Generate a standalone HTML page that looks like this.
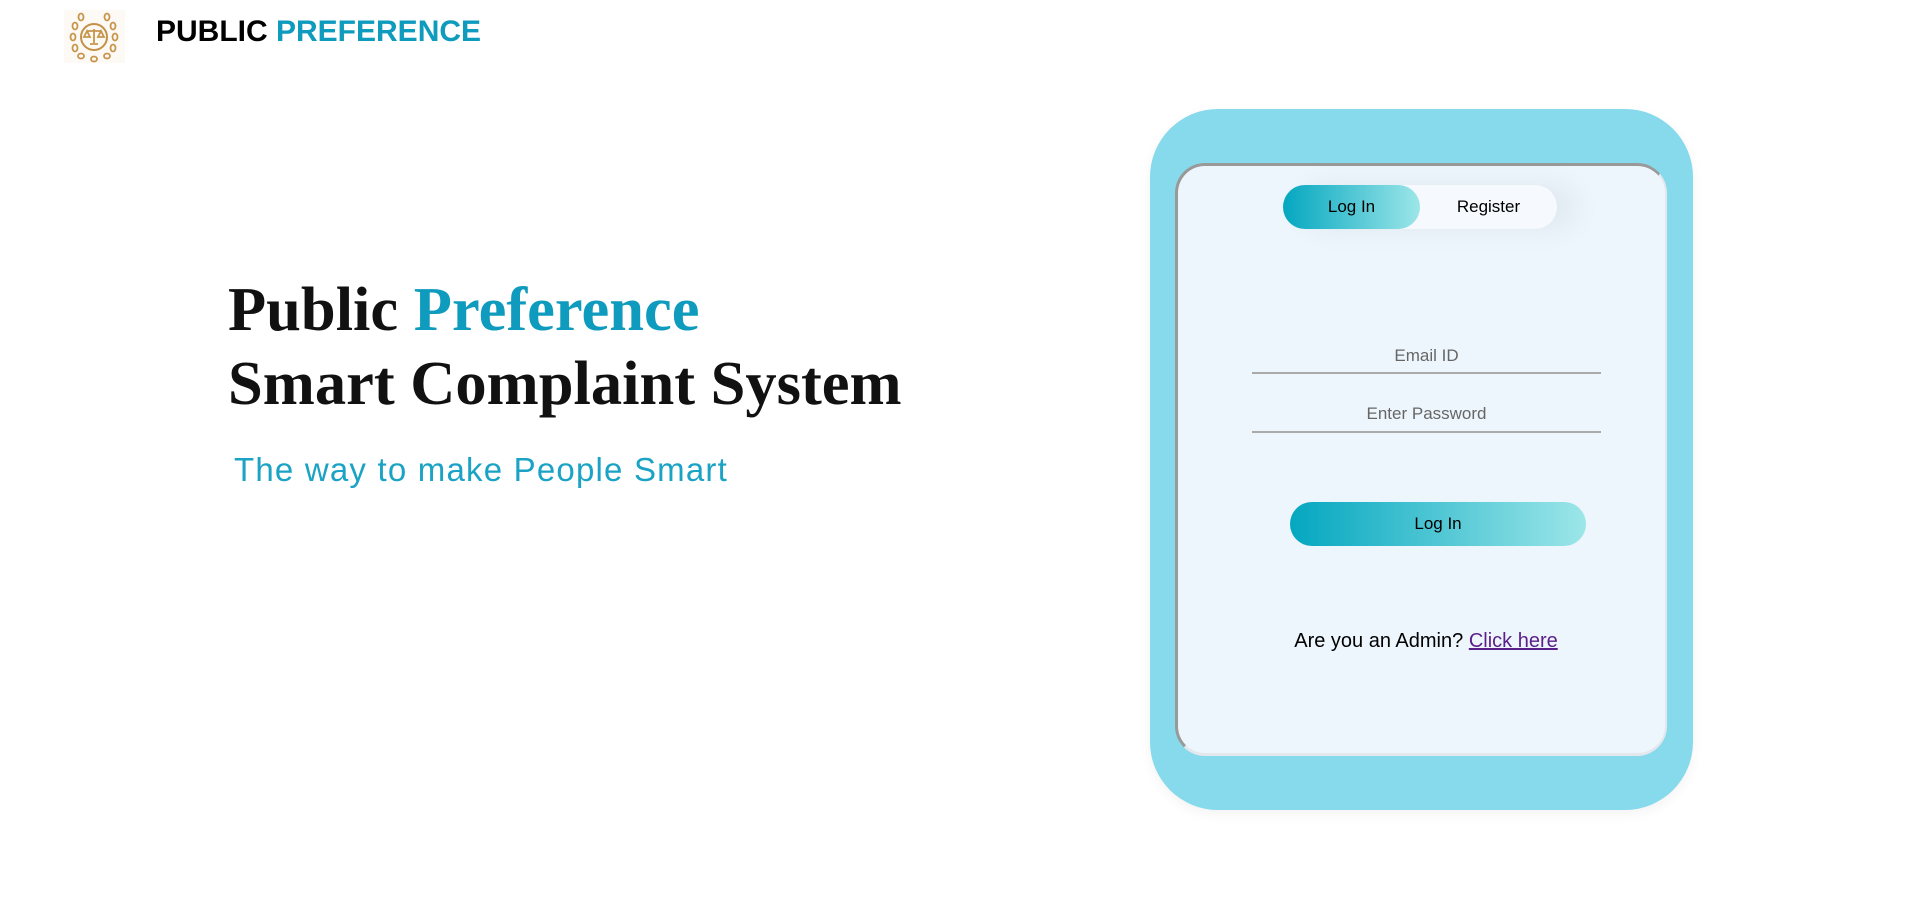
<!DOCTYPE html>
<html><head><meta charset="utf-8"><style>
*{margin:0;padding:0;box-sizing:border-box}
body{width:1919px;height:923px;background:#fff;position:relative;overflow:hidden;font-family:"Liberation Sans",Arial,sans-serif}
.abs{position:absolute}
.hdr{left:156px;top:15px;font-size:30px;font-weight:bold;color:#000;white-space:nowrap}
.c{color:#0e9bbd}
.h1{left:228px;top:272px;font-family:"Liberation Serif",serif;font-weight:bold;font-size:62.5px;line-height:74px;color:#111;white-space:nowrap}
.tag{left:234px;top:451px;font-size:33px;color:#1aa3c4;letter-spacing:1.2px;white-space:nowrap}
.outer{left:1150px;top:109px;width:543px;height:701px;border-radius:68px;background:#87d9ec;box-shadow:0 4px 12px rgba(0,0,0,0.05)}
.inner{left:1175px;top:163px;width:492px;height:593px;border-radius:30px;background:#eef6fd;border-top:3px solid #999;border-left:3px solid #999;border-right:2px solid #e4e8ec;border-bottom:3px solid #e4e8ec}
.tabs{left:1283px;top:185px;width:274px;height:44px;border-radius:22px;background:#f6f9fd;box-shadow:20px 0 30px rgba(0,0,0,0.06)}
.tab1{left:1283px;top:185px;width:137px;height:44px;border-radius:22px;background:linear-gradient(90deg,#04a7c0,#9ce6e8);font-size:17px;line-height:44px;text-align:center;color:#000}
.tab2{left:1420px;top:185px;width:137px;height:44px;font-size:17px;line-height:44px;text-align:center;color:#000}
.inp{left:1252px;width:349px;border-bottom:2px solid #aaa;text-align:center;color:#666;font-size:17px}
.btn{left:1290px;top:502px;width:296px;height:44px;border-radius:22px;background:linear-gradient(90deg,#04a7c0,#9ce6e8);text-align:center;line-height:44px;font-size:17px;color:#000}
.adm{left:1226px;top:630px;width:400px;text-align:center;font-size:20px;color:#000}
.adm a{color:#5b1f8a;text-decoration:underline}
</style></head><body>
<svg class="abs" style="left:64px;top:10px" width="61" height="53" viewBox="0 0 61 53">
<rect width="61" height="53" fill="#fdfaf5"/>
<circle cx="30" cy="27" r="13" fill="none" stroke="#c49149" stroke-width="2"/>
<g fill="none" stroke="#c8954c" stroke-width="1.8">
<ellipse cx="9" cy="27" rx="2.5" ry="3.5"/><ellipse cx="51" cy="27" rx="2.5" ry="3.5"/>
<ellipse cx="11" cy="16" rx="2.5" ry="3.5"/><ellipse cx="49" cy="16" rx="2.5" ry="3.5"/>
<ellipse cx="11" cy="38" rx="2.5" ry="3.5"/><ellipse cx="49" cy="38" rx="2.5" ry="3.5"/>
<ellipse cx="17" cy="7" rx="2.5" ry="3.5"/><ellipse cx="43" cy="7" rx="2.5" ry="3.5"/>
<ellipse cx="17" cy="46" rx="3" ry="2.5"/><ellipse cx="43" cy="46" rx="3" ry="2.5"/>
<ellipse cx="30" cy="49" rx="3" ry="2.5"/>
<path d="M23 21h14M30 19v14M26 34h8M23 21l-3 6h6zM37 21l-3 6h6z"/>
</g></svg>
<div class="abs hdr">PUBLIC <span class="c">PREFERENCE</span></div>
<div class="abs h1">Public <span class="c">Preference</span><br>Smart Complaint System</div>
<div class="abs tag">The way to make People Smart</div>
<div class="abs outer"></div>
<div class="abs inner"></div>
<div class="abs tabs"></div>
<div class="abs tab1">Log In</div>
<div class="abs tab2">Register</div>
<div class="abs inp" style="top:346px;height:28px">Email ID</div>
<div class="abs inp" style="top:404px;height:29px">Enter Password</div>
<div class="abs btn">Log In</div>
<div class="abs adm">Are you an Admin? <a>Click here</a></div>
</body></html>
